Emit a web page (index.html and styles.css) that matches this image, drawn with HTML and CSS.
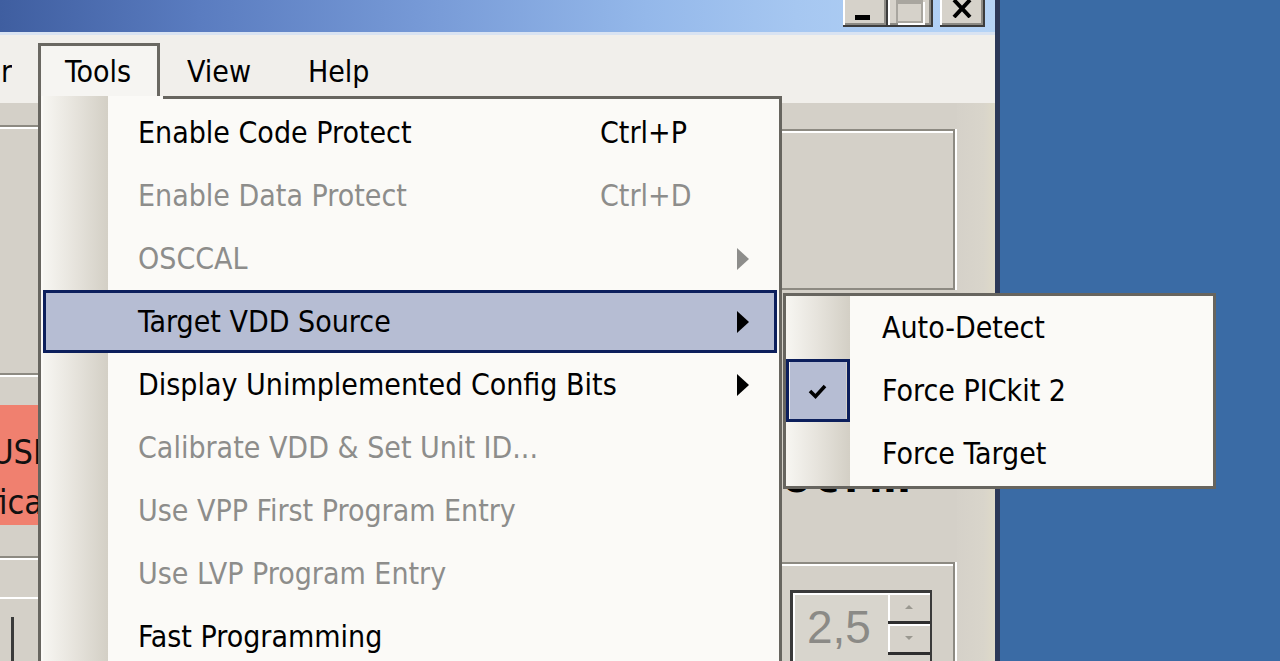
FILE: index.html
```html
<!DOCTYPE html>
<html>
<head>
<meta charset="utf-8">
<title>PICkit 2 - Tools menu</title>
<link rel="stylesheet" href="styles.css">
</head>
<body>
<div class="desktop">
  <div class="window">
    <div class="titlebar">
      <div class="tbtn tb-min"><span class="min-ic"></span></div>
      <div class="tbtn tb-max"><span class="max-ic"></span></div>
      <div class="tbtn tb-close">
        <svg width="22" height="18" viewBox="0 0 22 18"><path d="M3 0 L19 17 M19 0 L3 17" stroke="#000" stroke-width="4" fill="none"/></svg>
      </div>
    </div>
    <div class="menubar">
      <div class="mb-cut"><span>Programmer</span></div>
      <div class="mb-item open">Tools</div>
      <div class="mb-item">View</div>
      <div class="mb-item">Help</div>
    </div>
    <div class="client">
      <div class="leftcol">
        <div class="lgbox"></div>
        <div class="status-red">
          <div class="rline r1">Found USB</div>
          <div class="rline r2">Verifica</div>
        </div>
        <div class="lgbox2">
          <div class="lpanel"><div class="lbtn"></div></div>
        </div>
      </div>
      <div class="maincol">
        <div class="gbox gbox1"></div>
        <div class="bigtext">ocrm</div>
        <div class="gbox gbox2">
          <div class="spinner">
            <div class="spin-field">2,5</div>
            <div class="spin-btns">
              <div class="spin-btn"><span class="up"></span></div>
              <div class="spin-btn"><span class="down"></span></div>
            </div>
          </div>
        </div>
      </div>
      <div class="rightstrip"></div>
    </div>
  </div>

  <div class="menu">
    <div class="menu-topline"></div>
    <div class="mi"><span class="ic"></span><span class="lbl">Enable Code Protect</span><span class="sc">Ctrl+P</span><span class="ar"></span></div>
    <div class="mi dis"><span class="ic"></span><span class="lbl">Enable Data Protect</span><span class="sc">Ctrl+D</span><span class="ar"></span></div>
    <div class="mi dis"><span class="ic"></span><span class="lbl">OSCCAL</span><span class="sc"></span><span class="ar"><span class="tri"></span></span></div>
    <div class="mi hl"><span class="ic"></span><span class="lbl">Target VDD Source</span><span class="sc"></span><span class="ar"><span class="tri"></span></span></div>
    <div class="mi"><span class="ic"></span><span class="lbl">Display Unimplemented Config Bits</span><span class="sc"></span><span class="ar"><span class="tri"></span></span></div>
    <div class="mi dis"><span class="ic"></span><span class="lbl">Calibrate VDD &amp; Set Unit ID...</span><span class="sc"></span><span class="ar"></span></div>
    <div class="mi dis"><span class="ic"></span><span class="lbl">Use VPP First Program Entry</span><span class="sc"></span><span class="ar"></span></div>
    <div class="mi dis"><span class="ic"></span><span class="lbl">Use LVP Program Entry</span><span class="sc"></span><span class="ar"></span></div>
    <div class="mi"><span class="ic"></span><span class="lbl">Fast Programming</span><span class="sc"></span><span class="ar"></span></div>
  </div>

  <div class="submenu">
    <div class="si"><span class="sic"></span><span class="lbl">Auto-Detect</span></div>
    <div class="si"><span class="sic checked"><svg width="22" height="18" viewBox="0 0 22 18"><path d="M3 9 L8.5 14.5 L18 4" stroke="#000" stroke-width="3.6" fill="none"/></svg></span><span class="lbl">Force PICkit 2</span></div>
    <div class="si"><span class="sic"></span><span class="lbl">Force Target</span></div>
  </div>
</div>
</body>
</html>
```

FILE: styles.css
```css
* { box-sizing: border-box; }
html, body { margin: 0; padding: 0; }
body {
  width: 1280px;
  height: 661px;
  overflow: hidden;
  background: #3a6ba5;
  font-family: "DejaVu Sans Condensed", "DejaVu Sans", sans-serif;
  font-stretch: condensed;
}
.desktop {
  position: relative;
  width: 1280px;
  height: 661px;
  overflow: hidden;
  background: #3a6ba5;
}

/* ---------- window ---------- */
.window {
  width: 1000px;
  height: 661px;
  display: flex;
  flex-direction: column;
  border-right: 5px solid #2c3858;
  background: #d4d0c8;
}
.titlebar {
  height: 35px;
  flex: none;
  background: linear-gradient(90deg, #3f5ea0 0%, #5a7cc0 20%, #7699d6 42%, #94b8ea 65%, #a6c7f1 80%, #b6d4f6 100%);
  border-bottom: 3px solid #d9e3f2;
  display: flex;
  justify-content: flex-end;
  align-items: flex-start;
  padding-right: 10px;
}
.tbtn {
  width: 45px;
  height: 27px;
  background: #d6d2ca;
  border-right: 2px solid #3c3c3c;
  border-bottom: 2px solid #3c3c3c;
  box-shadow: inset 2px 0 0 #fff, inset -2px -2px 0 #8c8a84;
  display: flex;
  justify-content: center;
}
.tb-close { margin-left: 7px; }
.min-ic {
  align-self: flex-end;
  width: 15px;
  height: 5px;
  background: #000;
  margin-bottom: 5px;
  margin-right: 4px;
}
.max-ic {
  width: 27px;
  height: 23px;
  border: 2px solid #a9a69f;
  border-top-width: 4px;
  box-shadow: 2px 2px 0 #fff;
}
.tb-close svg { display: block; }

.menubar {
  height: 68px;
  flex: none;
  background: #f1efeb;
  display: flex;
  align-items: flex-start;
  font-size: 30px;
  color: #000;
}
.mb-cut {
  width: 12px;
  overflow: hidden;
  display: flex;
  justify-content: flex-end;
  margin-top: 8px;
  padding-top: 9px;
  line-height: 40px;
  white-space: nowrap;
}
.mb-item {
  margin-top: 8px;
  height: 60px;
  padding: 6px 27px 0 24px;
  line-height: 40px;
  border: 3px solid transparent;
  border-bottom: none;
  white-space: nowrap;
}
.mb-item.open {
  margin-left: 26px;
  padding-right: 26px;
  border-color: #6a6862;
  background: #f6f5f2;
}

/* ---------- client area ---------- */
.client {
  flex: 1;
  display: flex;
  background: #d4d0c8;
  overflow: hidden;
}
.leftcol {
  width: 40px;
  flex: none;
  display: flex;
  flex-direction: column;
  overflow: hidden;
}
.lgbox {
  flex: none;
  margin-top: 22px;
  height: 250px;
  border-top: 2px solid #8d8a82;
  border-bottom: 2px solid #8d8a82;
  box-shadow: inset 0 2px 0 #fff, 0 2px 0 #fff;
}
.status-red {
  flex: none;
  margin-top: 30px;
  height: 120px;
  background: #f0806f;
  font-size: 34px;
  line-height: 50px;
  padding-top: 22px;
  color: #111;
}
.rline {
  display: flex;
  justify-content: flex-end;
  white-space: nowrap;
}
.r1 { margin-right: -14px; }
.r2 { margin-right: -3px; }
.lgbox2 {
  flex: 1 1 0;
  min-height: 0;
  margin-top: 31px;
  border-top: 2px solid #8d8a82;
  box-shadow: inset 0 2px 0 #fff;
  padding-top: 39px;
}
.lpanel {
  height: 100%;
  border-top: 2px solid #fff;
  padding-top: 18px;
}
.lbtn {
  width: 14px;
  height: 60px;
  border-right: 3px solid #3a3a3a;
  box-shadow: 18px 0 0 -14px #fff;
}

.maincol {
  flex: 1;
  display: flex;
  flex-direction: column;
  padding-top: 26px;
  overflow: hidden;
}
.gbox {
  margin-right: 2px;
  border-top: 2px solid #8d8a82;
  border-right: 2px solid #8d8a82;
  box-shadow: inset 0 2px 0 #fff, 2px 0 0 #fff;
}
.gbox1 {
  flex: none;
  height: 161px;
  border-bottom: 2px solid #8d8a82;
}
.bigtext {
  flex: none;
  margin-top: 163px;
  height: 50px;
  line-height: 50px;
  padding-left: 743px;
  font-family: "DejaVu Sans", sans-serif;
  font-stretch: normal;
  font-weight: bold;
  font-size: 40px;
  letter-spacing: 5px;
  color: #000;
  white-space: nowrap;
  overflow: hidden;
}
.gbox2 {
  flex: 1 1 0;
  min-height: 0;
  margin-top: 59px;
  padding: 26px 0 0 750px;
  overflow: hidden;
}
.spinner {
  width: 142px;
  height: 80px;
  display: flex;
  border: 3px solid #3a3a3a;
  border-right-width: 2px;
  background: #d6d3cb;
}
.spin-field {
  width: 95px;
  border: 2px solid #fff;
  border-right: none;
  background: #d8d5cd;
  color: #8b8a86;
  font-family: "Liberation Sans", sans-serif;
  font-size: 46px;
  padding-left: 12px;
  padding-top: 6px;
  line-height: 52px;
}
.spin-btns {
  flex: 1;
  display: flex;
  flex-direction: column;
}
.spin-btn {
  height: 31px;
  background: #d6d2ca;
  border-bottom: 3px solid #2e2e2e;
  box-shadow: inset 2px 2px 0 #fff;
  display: flex;
  align-items: center;
  justify-content: center;
}
.spin-btn .up {
  width: 0; height: 0;
  border-left: 4px solid transparent;
  border-right: 4px solid transparent;
  border-bottom: 4px solid #9a9890;
}
.spin-btn .down {
  width: 0; height: 0;
  border-left: 4px solid transparent;
  border-right: 4px solid transparent;
  border-top: 4px solid #9a9890;
}
.rightstrip {
  width: 38px;
  flex: none;
  background: linear-gradient(90deg, #d5d1c9 0%, #d9d5cb 70%, #dfdac9 100%);
}

/* ---------- dropdown menu ---------- */
.menu {
  position: absolute;
  left: 38px;
  top: 96px;
  width: 744px;
  height: 570px;
  border-left: 3px solid #67655f;
  border-right: 3px solid #67655f;
  background:
    linear-gradient(90deg, #f7f6f2 0%, #e6e3dc 50%, #d3cfc5 100%) 2px 0 / 65px 100% no-repeat,
    #fbfaf7;
  font-size: 30px;
}
.menu-topline {
  height: 3px;
  margin-left: 122px;
  background: #67655f;
  margin-bottom: 2px;
}
.mi {
  height: 63px;
  margin: 0 2px;
  display: flex;
  align-items: center;
  color: #000;
  white-space: nowrap;
}
.mi.dis { color: #8d8d8b; }
.mi.hl {
  background: #b6bdd3;
  box-shadow: inset 0 0 0 3px #0c1f5c;
}
.mi .ic { width: 65px; flex: none; }
.mi .lbl { flex: 1 1 0; min-width: 0; padding-left: 30px; }
.mi .sc { width: 100px; flex: none; }
.mi .ar {
  width: 77px;
  flex: none;
  padding-left: 37px;
  display: flex;
  align-items: center;
}
.tri {
  width: 0;
  height: 0;
  border-left: 12px solid #000;
  border-top: 11px solid transparent;
  border-bottom: 11px solid transparent;
}
.mi.dis .tri { border-left-color: #8d8d8b; }

/* ---------- submenu ---------- */
.submenu {
  position: absolute;
  left: 783px;
  top: 293px;
  width: 433px;
  height: 196px;
  border: 3px solid #67655f;
  background:
    linear-gradient(90deg, #f7f6f2 0%, #e6e3dc 50%, #d3cfc5 100%) 0 0 / 64px 100% no-repeat,
    #fbfaf7;
  font-size: 30px;
}
.si {
  height: 63px;
  display: flex;
  align-items: center;
  white-space: nowrap;
  color: #000;
}
.sic {
  width: 64px;
  height: 63px;
  flex: none;
  padding: 2px 4px;
  display: flex;
}
.sic.checked svg {
  margin: auto;
  display: block;
}
.sic.checked {
  background: #b6bdd3;
  box-shadow: inset 0 0 0 3px #0c1f5c;
  background-clip: content-box;
}
.si .lbl { padding-left: 32px; }
```
